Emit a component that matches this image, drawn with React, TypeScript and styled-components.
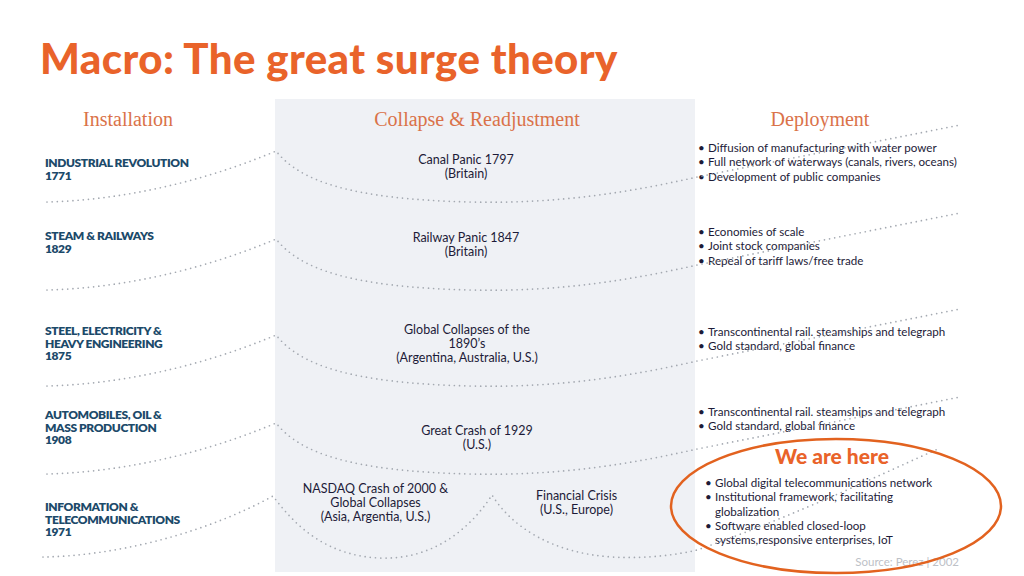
import React from "react"
import styled, { createGlobalStyle } from "styled-components"

const GlobalStyle = createGlobalStyle`
    html, body {
        margin: 0;
        padding: 0;
        background: #ffffff;
    }
    body {
        font-family: Lato, "Liberation Sans", sans-serif;
    }
`

type Era = {
    label: string[]
    labelPad: number
    crashes: { lines: string[]; pad: number; shift: number }[]
    traits: string[][]
    traitsPad: number
}

const eras: Era[] = [
    {
        label: ["INDUSTRIAL REVOLUTION", "1771"],
        labelPad: 17,
        crashes: [{ lines: ["Canal Panic 1797", "(Britain)"], pad: 13, shift: 38 }],
        traits: [
            ["Diffusion of manufacturing with water power"],
            ["Full network of waterways (canals, rivers, oceans)"],
            ["Development of public companies"],
        ],
        traitsPad: 1,
    },
    {
        label: ["STEAM & RAILWAYS", "1829"],
        labelPad: 8,
        crashes: [{ lines: ["Railway Panic 1847", "(Britain)"], pad: 9, shift: 38 }],
        traits: [["Economies of scale"], ["Joint stock companies"], ["Repeal of tariff laws/free trade"]],
        traitsPad: 3,
    },
    {
        label: ["STEEL, ELECTRICITY &", "HEAVY ENGINEERING", "1875"],
        labelPad: 7,
        crashes: [
            { lines: ["Global Collapses of the", "1890’s", "(Argentina, Australia, U.S.)"], pad: 4.5, shift: 36 },
        ],
        traits: [["Transcontinental rail. steamships and telegraph"], ["Gold standard, global finance"]],
        traitsPad: 7,
    },
    {
        label: ["AUTOMOBILES, OIL &", "MASS PRODUCTION", "1908"],
        labelPad: 9,
        crashes: [{ lines: ["Great Crash of 1929", "(U.S.)"], pad: 24, shift: 16 }],
        traits: [["Transcontinental rail. steamships and telegraph"], ["Gold standard, global finance"]],
        traitsPad: 5,
    },
    {
        label: ["INFORMATION &", "TELECOMMUNICATIONS", "1971"],
        labelPad: 56,
        crashes: [
            { lines: ["NASDAQ Crash of 2000 &", "Global Collapses", "(Asia, Argentia, U.S.)"], pad: 37, shift: 0 },
            { lines: ["Financial Crisis", "(U.S., Europe)"], pad: 44, shift: 0 },
        ],
        traits: [
            ["Global digital telecommunications network"],
            ["Institutional framework, facilitating", "globalization"],
            ["Software enabled closed-loop", "systems,responsive enterprises, IoT"],
        ],
        traitsPad: 0,
    },
]

// one surge wave, drawn for the first era and shifted down for the next ones
const wave = "M47,202 C120,200 200,183 276,151 C300,181 350,199 470,202 C560,204 630,192 697,177 L960,125"
const waveShifts = [0, 88, 184, 272]
const lastWave =
    "M43,557 C110,556 200,536 273,496 C298,530 330,556 380,558 C430,560 468,532 492,495 C512,527 552,553 612,557 C650,559 680,554 697,550 C800,514 890,470 940,448"

const Page = styled.div`
    position: relative;
    width: 1024px;
    height: 576px;
    overflow: hidden;
    background: #ffffff;
`

const Header = styled.header`
    box-sizing: border-box;
    height: 99px;
    padding: 37px 0 0 40px;
`

const Title = styled.h1`
    margin: 0;
    font-family: Lato, "Liberation Sans", sans-serif;
    font-weight: 900;
    font-size: 42px;
    line-height: 42px;
    letter-spacing: 0.4px;
    color: #e9632a;
`

const Board = styled.main`
    display: grid;
    grid-template-columns: 275px 420px 1fr;
    grid-template-rows: 41px 82px 96px 82px 45px 127px;
`

const Panel = styled.div`
    grid-column: 2;
    grid-row: 1 / -1;
    background: #eff1f5;
`

const ColHead = styled.h2<{ $col: number; $shift: number }>`
    grid-column: ${(p) => p.$col};
    grid-row: 1;
    margin: 0;
    display: flex;
    align-items: center;
    justify-content: center;
    padding-right: ${(p) => p.$shift}px;
    font-family: "Liberation Serif", serif;
    font-weight: 400;
    font-size: 20px;
    color: #da7249;
`

const EraLabel = styled.div<{ $row: number; $pad: number }>`
    grid-column: 1;
    grid-row: ${(p) => p.$row};
    padding: ${(p) => p.$pad}px 0 0 45px;
    font-weight: 800;
    font-size: 12px;
    line-height: 12.7px;
    letter-spacing: -0.4px;
    color: #1c4a6a;
`

const CrashCell = styled.div<{ $row: number }>`
    grid-column: 2;
    grid-row: ${(p) => p.$row};
    display: flex;
    padding-right: ${(p) => (p.$row === 6 ? 18 : 0)}px;
`

const Crash = styled.div<{ $pad: number; $shift: number }>`
    flex: 1;
    padding: ${(p) => p.$pad}px ${(p) => p.$shift}px 0 0;
    text-align: center;
    font-size: 12.5px;
    line-height: 14px;
    color: #1d1b38;
`

const TraitCell = styled.div<{ $row: number; $pad: number }>`
    grid-column: 3;
    grid-row: ${(p) => p.$row};
    display: flex;
    flex-direction: column;
    padding: ${(p) => p.$pad}px 0 0 3px;
`

const Callout = styled.div`
    display: flex;
    flex-direction: column;
    width: 254px;
    height: 100%;
    margin-left: 7px;
`

const CalloutTitle = styled.div`
    font-weight: 900;
    font-size: 21px;
    line-height: 22px;
    text-align: center;
    color: #e9632a;
`

const TraitList = styled.ul<{ $gap: number }>`
    margin: ${(p) => p.$gap}px 0 0;
    padding: 0;
    list-style: none;
`

const Trait = styled.li`
    display: flex;
    font-size: 11.6px;
    line-height: 14.3px;
    color: #1d1b38;
    white-space: nowrap;
`

const Bullet = styled.span`
    flex: 0 0 10px;
`

const Source = styled.div`
    margin-top: auto;
    padding-bottom: 3px;
    text-align: right;
    font-size: 11.5px;
    line-height: 14px;
    color: #bdc1c7;
`

const Overlay = styled.svg`
    position: absolute;
    left: 0;
    top: 0;
    pointer-events: none;
`

const Lines = ({ lines }: { lines: string[] }) => (
    <>
        {lines.map((line, i) => (
            <React.Fragment key={i}>
                {i > 0 && <br />}
                {line}
            </React.Fragment>
        ))}
    </>
)

const Traits = ({ items, gap = 0 }: { items: string[][]; gap?: number }) => (
    <TraitList $gap={gap}>
        {items.map((item, i) => (
            <Trait key={i}>
                <Bullet>•</Bullet>
                <span>
                    <Lines lines={item} />
                </span>
            </Trait>
        ))}
    </TraitList>
)

const Curves = () => (
    <Overlay width="1024" height="576" viewBox="0 0 1024 576">
        <g fill="none" stroke="#a4a9b1" strokeWidth="1.7" strokeLinecap="round" strokeDasharray="0 5.2">
            {waveShifts.map((dy) => (
                <path key={dy} d={wave} transform={`translate(0 ${dy})`} />
            ))}
            <path d={lastWave} />
        </g>
        <ellipse cx="836" cy="506" rx="165" ry="67" fill="none" stroke="#e2621f" strokeWidth="2.5" />
    </Overlay>
)

export default function App() {
    const last = eras.length - 1
    return (
        <Page>
            <GlobalStyle />
            <Header>
                <Title>Macro: The great surge theory</Title>
            </Header>
            <Board>
                <Panel />
                <ColHead $col={1} $shift={19}>
                    Installation
                </ColHead>
                <ColHead $col={2} $shift={16}>
                    Collapse &amp; Readjustment
                </ColHead>
                <ColHead $col={3} $shift={79}>
                    Deployment
                </ColHead>
                {eras.map((era, i) => (
                    <React.Fragment key={era.label[0]}>
                        <EraLabel $row={i + 2} $pad={era.labelPad}>
                            <Lines lines={era.label} />
                        </EraLabel>
                        <CrashCell $row={i + 2}>
                            {era.crashes.map((c) => (
                                <Crash key={c.lines[0]} $pad={c.pad} $shift={c.shift}>
                                    <Lines lines={c.lines} />
                                </Crash>
                            ))}
                        </CrashCell>
                        <TraitCell $row={i + 2} $pad={era.traitsPad}>
                            {i === last ? (
                                <Callout>
                                    <CalloutTitle>We are here</CalloutTitle>
                                    <Traits items={era.traits} gap={9} />
                                    <Source>Source: Perez | 2002</Source>
                                </Callout>
                            ) : (
                                <Traits items={era.traits} />
                            )}
                        </TraitCell>
                    </React.Fragment>
                ))}
            </Board>
            <Curves />
        </Page>
    )
}
